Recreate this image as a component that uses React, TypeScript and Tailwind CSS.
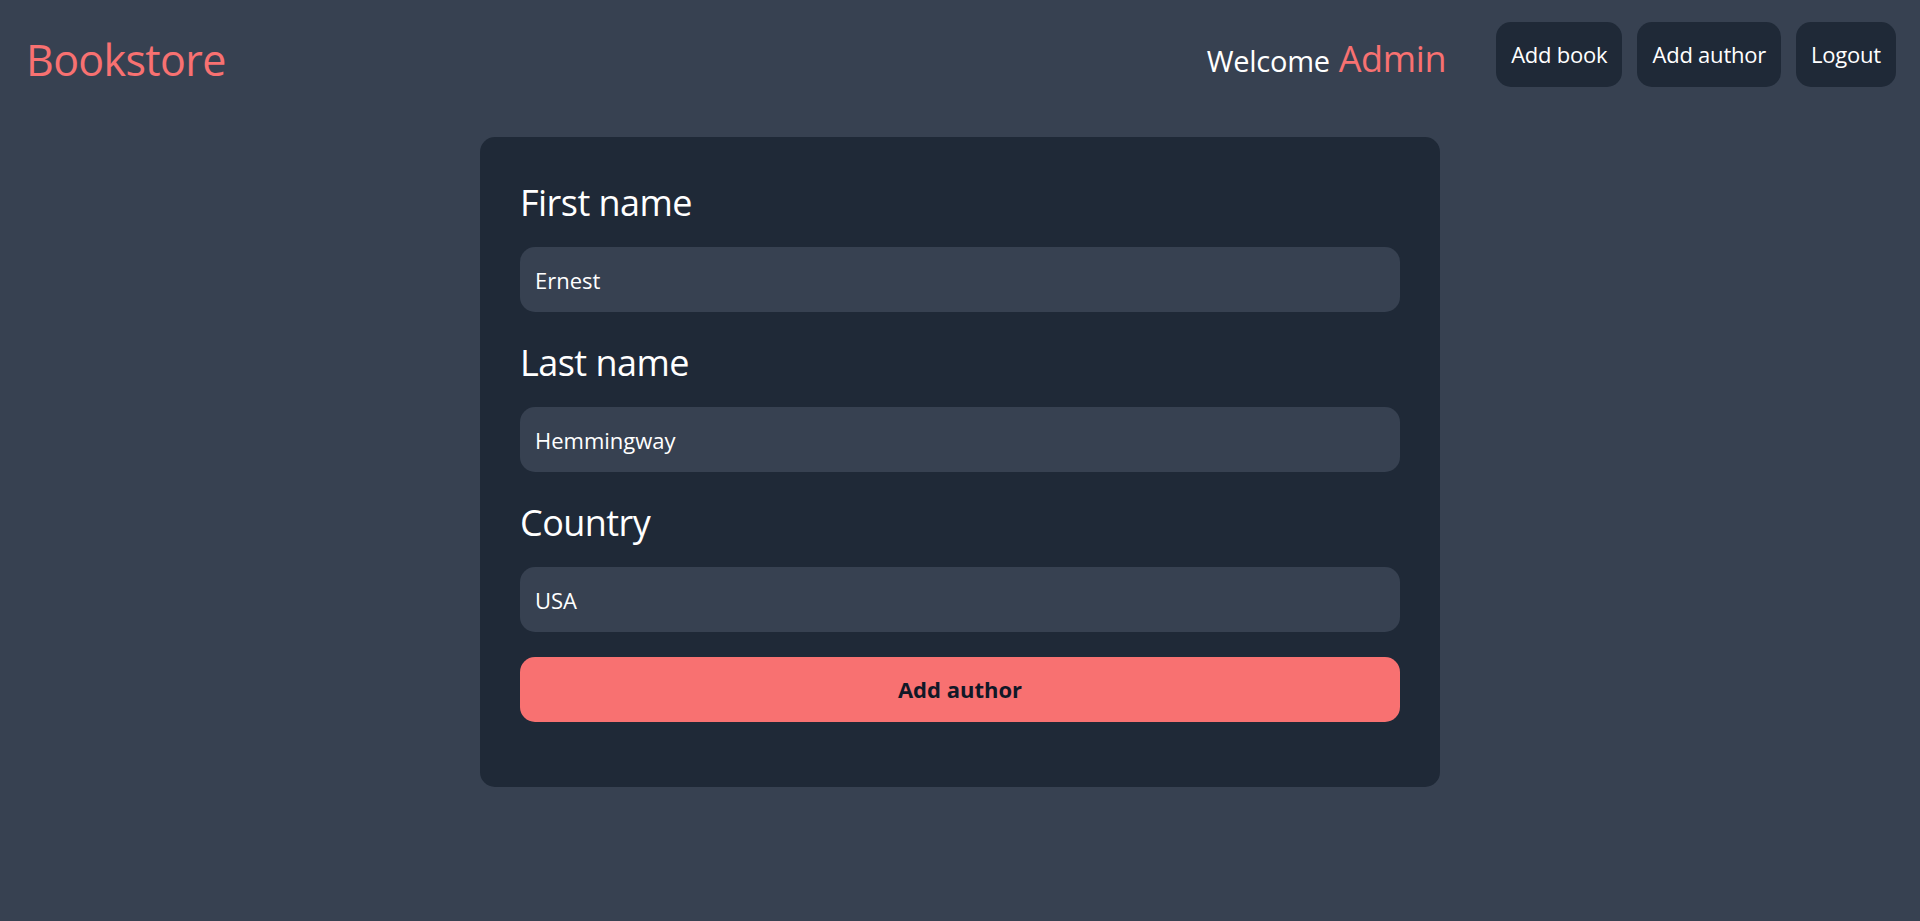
import React from "react";

const font = { fontFamily: '"Open Sans", "Noto Sans", sans-serif' };

function Field({ label, value }: { label: string; value: string }) {
  return (
    <>
      <label className="block h-[45px] pt-[3px] text-[36px] leading-[45px] tracking-[-0.015em] text-white">{label}</label>
      <input
        readOnly
        value={value}
        className="h-[65px] w-full rounded-[15px] bg-[#374151] px-[15px] text-[22px] leading-[35px] text-white outline-none"
      />
    </>
  );
}

export default function App() {
  return (
    <div className="min-h-[921px] w-full bg-[#374151]" style={font}>
      <header className="flex items-center justify-between pl-[26px] pr-[24px] pt-[22px]">
        <h1 className="h-[50px] pt-[5px] text-[43px] leading-[50px] tracking-[-0.015em] text-[#f87171]">Bookstore</h1>
        <div className="flex items-center">
          <div className="mr-[50px] flex h-[50px] items-baseline gap-[9px] pt-[6px]">
            <span className="text-[29px] leading-[40px] tracking-[-0.01em] text-white">Welcome</span>
            <span className="text-[36px] leading-[45px] tracking-[-0.01em] text-[#f87171]">Admin</span>
          </div>
          <div className="flex gap-[15px]">
            {["Add book", "Add author", "Logout"].map((t) => (
              <button
                key={t}
                className="h-[65px] rounded-[15px] bg-[#1f2937] px-[15px] text-[22px] leading-[35px] tracking-[-0.01em] text-white"
              >
                {t}
              </button>
            ))}
          </div>
        </div>
      </header>
      <main className="mt-[50px] flex justify-center">
        <form className="flex w-[960px] flex-col gap-[25px] rounded-[15px] bg-[#1f2937] px-[40px] pb-[65px] pt-[40px]">
          <Field label="First name" value="Ernest" />
          <Field label="Last name" value="Hemmingway" />
          <Field label="Country" value="USA" />
          <button
            type="button"
            className="h-[65px] w-full rounded-[15px] bg-[#f87171] text-[22px] font-bold text-[#111827]"
          >
            Add author
          </button>
        </form>
      </main>
    </div>
  );
}
